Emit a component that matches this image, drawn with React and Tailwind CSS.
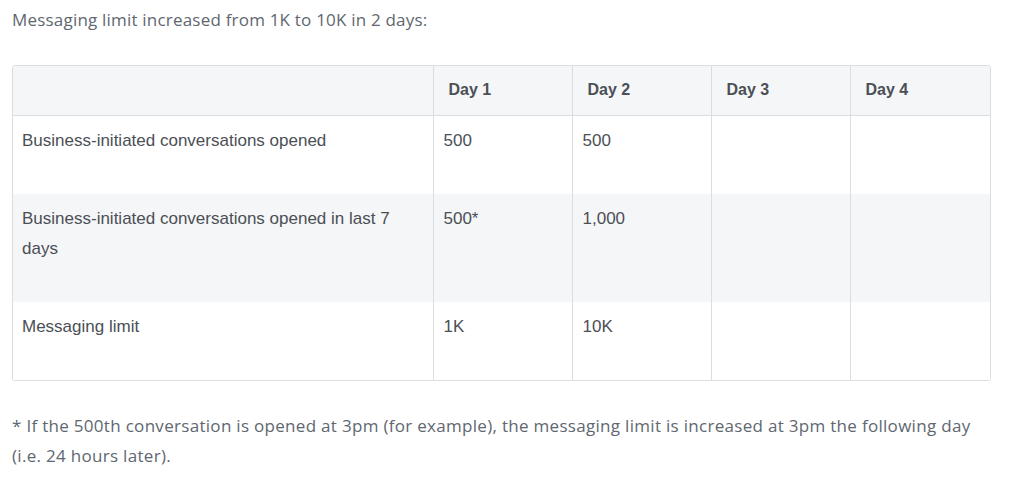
import React from 'react';

const rows = [
  { label: 'Business-initiated conversations opened', values: ['500', '500', '', ''] },
  { label: 'Business-initiated conversations opened in last 7 days', values: ['500*', '1,000', '', ''] },
  { label: 'Messaging limit', values: ['1K', '10K', '', ''] },
];

const days = ['Day 1', 'Day 2', 'Day 3', 'Day 4'];

const App = () => {
  return (
    <div className="w-[1024px] h-[483px] bg-white overflow-hidden pl-[12px] pt-[8px]" style={{ fontFamily: '"Open Sans", Lato, sans-serif' }}>
      <p className="text-[17px] tracking-[0.2px] leading-[24px] text-[#606770]">Messaging limit increased from 1K to 10K in 2 days:</p>

      <div className="mt-[33px] w-[979px] border border-[#dadde1] rounded-[3px] overflow-hidden" style={{ fontFamily: '"Liberation Sans", Arial, sans-serif' }}>
        <table className="w-full border-collapse table-fixed text-[17px] text-[#4b4f56]">
          <colgroup>
            <col className="w-[420px]" />
            <col className="w-[139px]" />
            <col className="w-[139px]" />
            <col className="w-[139px]" />
            <col />
          </colgroup>
          <thead>
            <tr className="bg-[#f5f6f7] h-[49px] border-b border-[#dadde1]">
              <th className="p-0"></th>
              {days.map(d => (
                <th key={d} className="border-l border-[#dadde1] text-left font-bold text-[16px] px-[15px] text-[#4b4f56]">{d}</th>
              ))}
            </tr>
          </thead>
          <tbody>
            {rows.map((row, i) => (
              <tr key={row.label} className={i === 1 ? 'bg-[#f5f6f7]' : 'bg-white'}>
                <td className="align-top pl-[9px] pr-[30px] pt-[10px] pb-[38px] leading-[30px]">{row.label}</td>
                {row.values.map((v, j) => (
                  <td key={j} className="align-top border-l border-[#dadde1] px-[10px] pt-[10px] pb-[38px] leading-[30px]">{v}</td>
                ))}
              </tr>
            ))}
          </tbody>
        </table>
      </div>

      <p className="mt-[30px] w-[975px] text-[17px] tracking-[0.3px] leading-[30px] text-[#606770]">
        * If the 500th conversation is opened at 3pm (for example), the messaging limit is increased at 3pm the following day (i.e. 24 hours later).
      </p>
    </div>
  );
};

export default App;
